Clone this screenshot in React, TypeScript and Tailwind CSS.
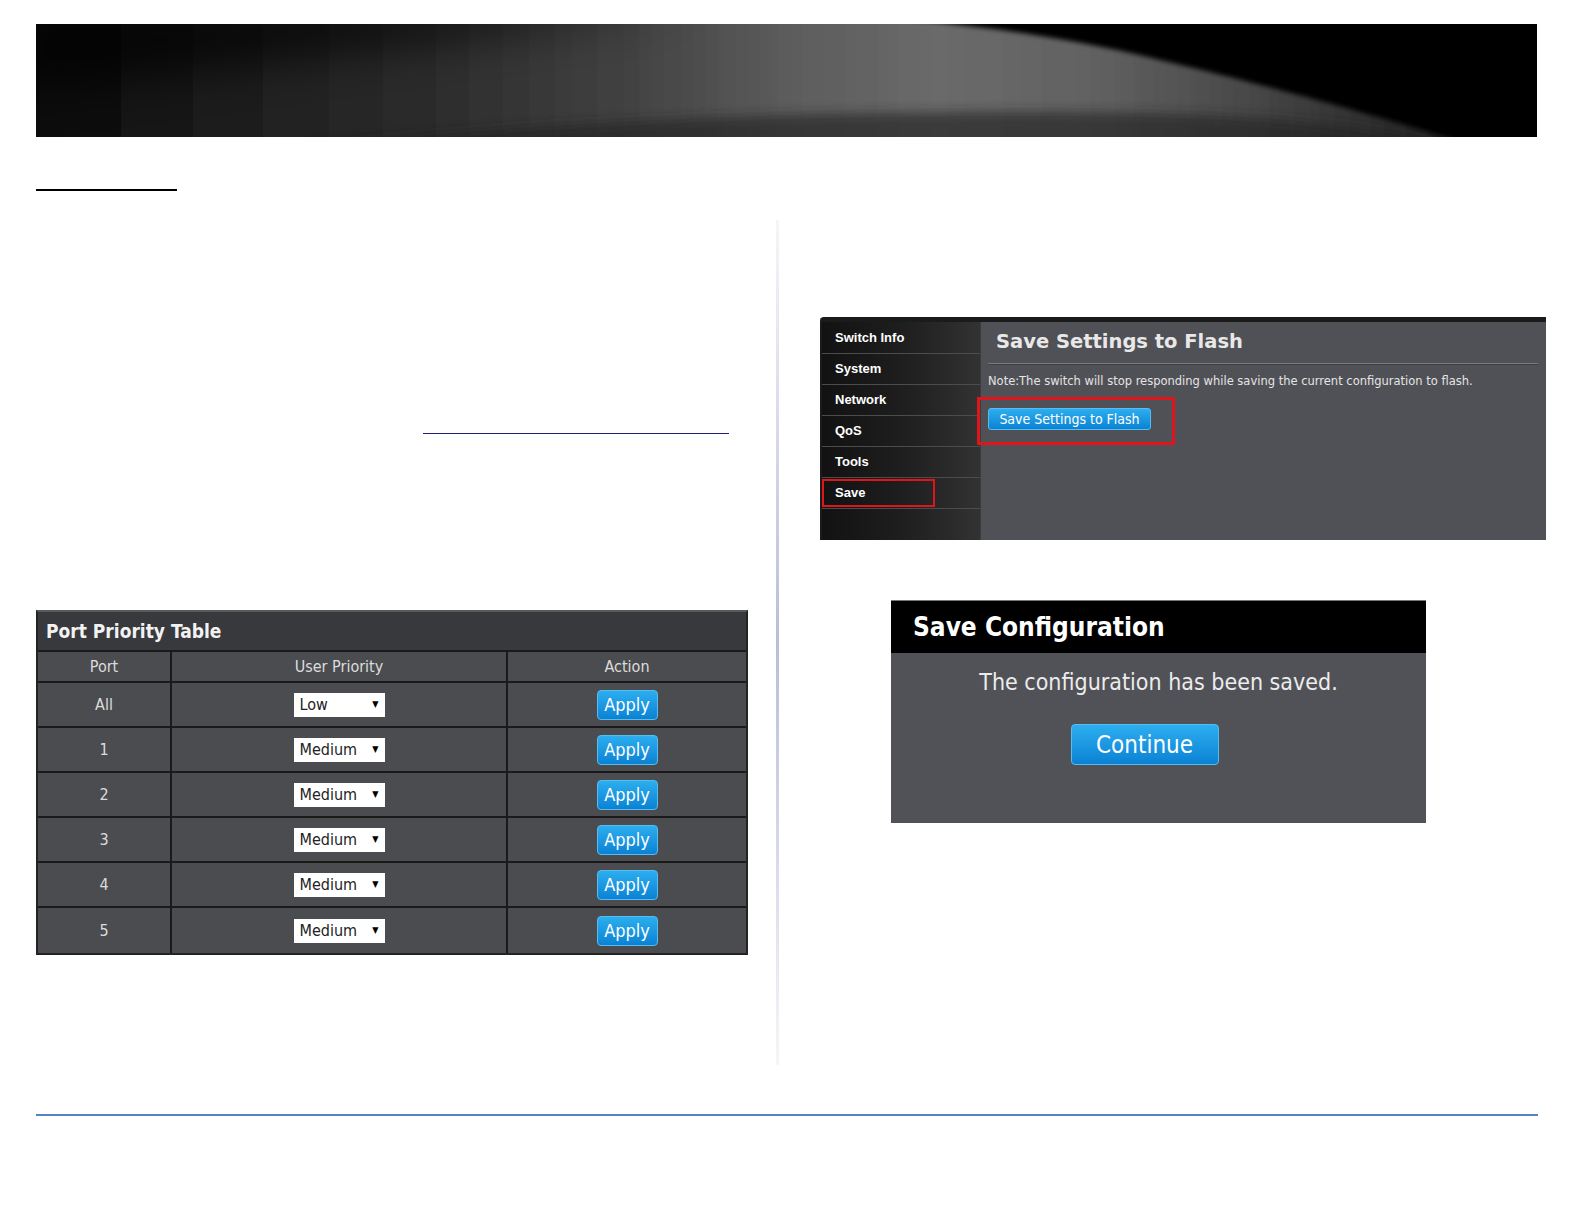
import React from "react";

const tahoma = { fontFamily: '"DejaVu Sans Condensed", "DejaVu Sans", sans-serif' };
const verdana = { fontFamily: '"DejaVu Sans", Verdana, sans-serif' };

function Banner() {
  return (
    <div className="ml-[36px] mt-[24px] h-[113px] w-[1501px] bg-black overflow-hidden">
      <svg width="1501" height="113" viewBox="0 0 1501 113" preserveAspectRatio="none">
        <defs>
          <linearGradient id="body" x1="0" y1="0" x2="1501" y2="0" gradientUnits="userSpaceOnUse">
            <stop offset="0" stopColor="#080808" />
            <stop offset="0.12" stopColor="#1c1c1c" />
            <stop offset="0.28" stopColor="#2e2e2e" />
            <stop offset="0.4" stopColor="#434343" />
            <stop offset="0.5" stopColor="#5c5c5c" />
            <stop offset="0.6" stopColor="#6a6a6a" />
            <stop offset="0.7" stopColor="#626262" />
            <stop offset="0.8" stopColor="#4a4a4a" />
            <stop offset="0.9" stopColor="#2c2c2c" />
            <stop offset="1" stopColor="#111111" />
          </linearGradient>
          <filter id="b3" x="-10%" y="-50%" width="120%" height="200%">
            <feGaussianBlur stdDeviation="2.5" />
          </filter>
          <filter id="b20" x="-20%" y="-100%" width="140%" height="300%">
            <feGaussianBlur stdDeviation="22" />
          </filter>
          <filter id="b6" x="-10%" y="-100%" width="120%" height="300%">
            <feGaussianBlur stdDeviation="6" />
          </filter>
        </defs>
        <rect width="1501" height="113" fill="#000" />
        <path d="M-10,125 L-10,-10 L820,-10 C870,-5 1000,5 1120,35 C1260,68 1360,98 1450,125 Z" fill="url(#body)" filter="url(#b3)" />
        <path d="M-20,-20 L650,-20 C480,5 280,30 -20,70 Z" fill="#000" opacity="0.7" filter="url(#b20)" />
        <path d="M260,125 C480,98 760,86 1050,88 C1220,90 1330,98 1420,125 Z" fill="#222" opacity="0.65" filter="url(#b6)" />
      </svg>
    </div>
  );
}

function Select({ value }: { value: string }) {
  return (
    <div className="w-[91px] h-[24px] bg-white flex items-center justify-between pl-[6px] pr-[6px] text-[16px] text-[#222]" style={tahoma}>
      <span>{value}</span>
      <span className="text-[9px] text-black">▼</span>
    </div>
  );
}

function ApplyBtn() {
  return (
    <div className="w-[61px] h-[30px] rounded-[4px] border border-[#56bdf2] bg-gradient-to-b from-[#2caeef] to-[#0a82d4] flex items-center justify-center text-white text-[18px]" style={tahoma}>
      Apply
    </div>
  );
}

function PortTable() {
  const rows = [
    ["All", "Low"],
    ["1", "Medium"],
    ["2", "Medium"],
    ["3", "Medium"],
    ["4", "Medium"],
    ["5", "Medium"],
  ];
  return (
    <div className="w-[712px] border-2 border-[#232323] border-t-[#5a5a5a] bg-[#4b4c50] text-[#dcdcdc]" style={tahoma}>
      <div className="h-[40px] bg-[#38393d] border-b-2 border-[#1a1a1a] flex items-center pl-[8px] text-[19px] font-bold text-[#f2f2f2]">
        Port Priority Table
      </div>
      <div className="grid grid-cols-[134px_336px_1fr] h-[31px] border-b-2 border-[#1a1a1a] text-[16px]">
        <div className="border-r-2 border-[#1a1a1a] flex items-center justify-center">Port</div>
        <div className="border-r-2 border-[#1a1a1a] flex items-center justify-center">User Priority</div>
        <div className="flex items-center justify-center">Action</div>
      </div>
      {rows.map(([p, v], i) => (
        <div
          key={p}
          className={
            "grid grid-cols-[134px_336px_1fr] h-[45px] text-[16px] " +
            (i < rows.length - 1 ? "border-b-2 border-[#1a1a1a]" : "")
          }
        >
          <div className="border-r-2 border-[#1a1a1a] flex items-center justify-center">{p}</div>
          <div className="border-r-2 border-[#1a1a1a] flex items-center justify-center">
            <Select value={v} />
          </div>
          <div className="flex items-center justify-center">
            <ApplyBtn />
          </div>
        </div>
      ))}
    </div>
  );
}

function SaveFlashShot() {
  const items = ["Switch Info", "System", "Network", "QoS", "Tools", "Save"];
  return (
    <div className="w-[726px] h-[223px] bg-[#505156] border-t-[5px] border-l-2 border-[#1b1b1b] rounded-tl-[4px] flex overflow-hidden">
      <div className="w-[159px] h-full bg-gradient-to-r from-[#121212] via-[#1e1e1e] to-[#323232] border-r border-[#3c3c3c] pt-[1px]">
        {items.map((it) => (
          <div
            key={it}
            className="relative h-[31px] border-b border-[#4c4c4c] flex items-center pl-[13px] text-[13px] font-bold text-white"
            style={{ fontFamily: '"Liberation Sans", Arial, sans-serif' }}
          >
            {it}
            {it === "Save" && (
              <div className="absolute left-0 top-[1px] w-[113px] h-[28px] border-2 border-[#e0151b]" />
            )}
          </div>
        ))}
      </div>
      <div className="flex-1 pl-[7px] pr-[8px] pt-[8px]" style={tahoma}>
        <div className="pl-[8px] text-[19.5px] leading-[24px] font-bold text-[#e8e8e8]" style={verdana}>
          Save Settings to Flash
        </div>
        <div className="mt-[9px] h-[1px] bg-[#7a7a7e] border-b border-[#3e3f43] box-content" />
        <div className="mt-[9px] text-[11.5px] leading-[14px] text-[#e4e4e4]" style={verdana}>
          Note:The switch will stop responding while saving the current configuration to flash.
        </div>
        <div className="relative mt-[20px] w-[163px]">
          <div className="h-[22px] w-[163px] rounded-[3px] border border-[#56bdf2] bg-gradient-to-b from-[#2caeef] to-[#0a82d4] flex items-center justify-center text-white text-[14px]">
            Save Settings to Flash
          </div>
          <div className="absolute left-[-11px] top-[-11px] w-[198px] h-[48px] border-[3px] border-[#e0151b]" />
        </div>
      </div>
    </div>
  );
}

function SaveConfigDialog() {
  return (
    <div className="w-[535px] h-[223px] bg-[#515257] border-t border-[#777]" style={tahoma}>
      <div className="h-[52px] bg-black flex items-center pl-[22px] text-[26px] font-bold text-white">
        Save Configuration
      </div>
      <div className="flex flex-col items-center">
        <div className="mt-[15px] text-[23px] leading-[28px] text-[#ececec]">The configuration has been saved.</div>
        <div className="mt-[28px] w-[148px] h-[41px] rounded-[4px] border border-[#56bdf2] bg-gradient-to-b from-[#2caeef] to-[#0a82d4] flex items-center justify-center text-white text-[24px] -translate-x-[14px]">
          Continue
        </div>
      </div>
    </div>
  );
}

export default function App() {
  return (
    <div className="w-[1584px] h-[1224px] bg-white overflow-hidden">
      <Banner />
      <div className="ml-[36px] mt-[52px] w-[141px] h-[2px] bg-black" />
      <div className="flex h-[923px]">
        <div className="ml-[36px] w-[712px] flex flex-col">
          <div className="mt-[242px] ml-[387px] w-[306px] h-[1px] bg-[#1f1f7a]" />
          <div className="mt-[176px]">
            <PortTable />
          </div>
        </div>
        <div className="ml-[28px] mt-[29px] w-[3px] h-[845px] bg-gradient-to-b from-[#f6f6f8] via-[#b9bdda] to-[#f6f6f8]" />
        <div className="ml-[41px] flex flex-col">
          <div className="mt-[126px]">
            <SaveFlashShot />
          </div>
          <div className="mt-[60px] ml-[71px]">
            <SaveConfigDialog />
          </div>
        </div>
      </div>
      <div className="ml-[36px] w-[1502px] h-[2px] bg-[#5386be]" />
    </div>
  );
}
